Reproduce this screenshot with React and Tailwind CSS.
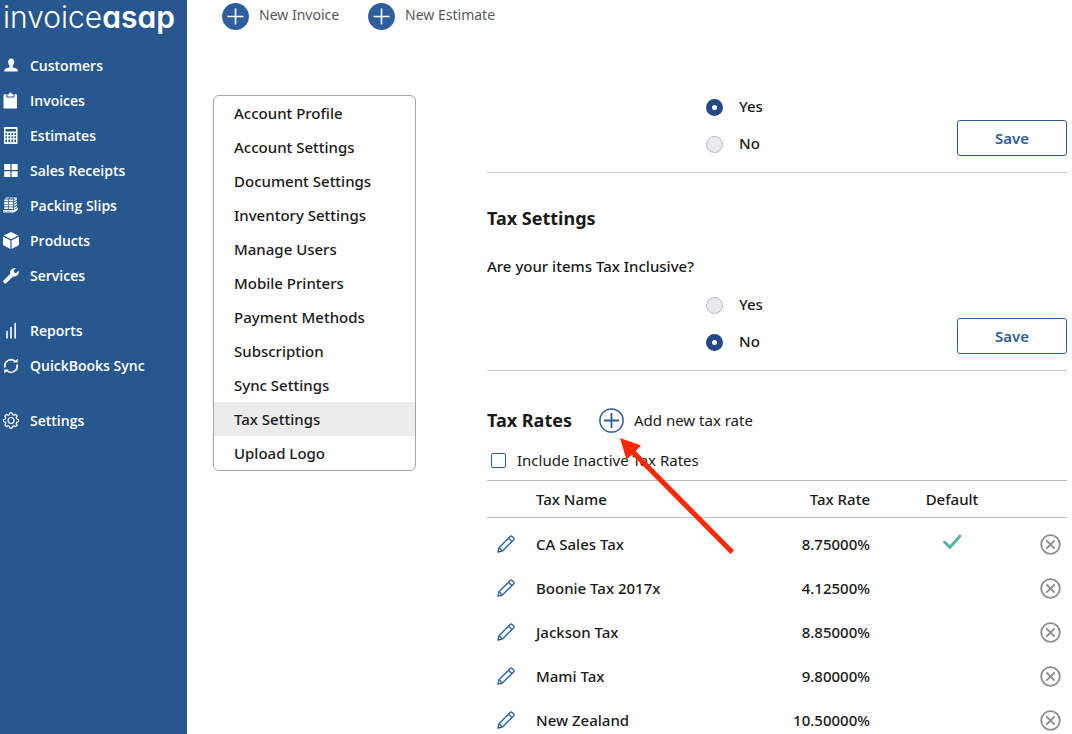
import React, { useState } from "react";

const navGroups = [
  [
    {
      label: "Customers",
      icon: (
        <path
          fill="currentColor"
          d="M8.200 1.500c2 0 3 1.500 3 3.500 0 1.400-.6 2.900-1.500 3.700v1.200c0 .6 3.900 1.200 4.600 2.300.3.500.4 1.500.4 2.300H1.300c0-.8.1-1.800.4-2.300.7-1.100 4.900-1.700 4.900-2.300V8.700C5.700 7.900 5.200 6.400 5.200 5c0-2 1-3.500 3-3.500z"
        />
      ),
    },
    {
      label: "Invoices",
      icon: (
        <g fill="currentColor">
          <path d="M1.500 2.200h1.900v3.200h8V2.200h1.900q.7 0 .7.700v12.900q0 .7-.7.700H1.200q-.7 0-.7-.7V2.900q0-.7 1-.7z" />
          <path d="M4.400 4.500V2.300h1.500C6 1.100 6.700.5 7.400.5s1.400.6 1.500 1.800h1.500v2.200z" />
        </g>
      ),
    },
    {
      label: "Estimates",
      icon: (
        <path
          fill="currentColor"
          fillRule="evenodd"
          d="M2 0h11.500q1 0 1 1v15q0 1-1 1H2q-1 0-1-1V1q0-1 1-1zM2.500 2v2.500H13V2zM2.500 6v2H4V6zM5.400 6v2H7V6zM8.400 6v2H10V6zM11.400 6v2H13V6zM2.500 9.300v2H4v-2zm2.900 0v2H7v-2zm3 0v2H10v-2zm3 0v2H13v-2zM2.500 12.600v2.600H4v-2.600zm2.900 0v2.600H7v-2.600zm3 0v2.600H10v-2.600zm3 0v2.600H13v-2.600z"
        />
      ),
    },
    {
      label: "Sales Receipts",
      icon: (
        <path
          fill="currentColor"
          d="M1.200 2h6.200v6H1.200zM8.600 2h6v6h-6zM1.200 9.200h6.200v5.800H1.200zM8.600 9.200h6v5.800h-6z"
        />
      ),
    },
    {
      label: "Packing Slips",
      icon: (
        <g fill="currentColor">
          <path d="M1.500 1.600 3.500.4h3L5.500 1.600zM6.300 1.600 7.500.4h3l-1.200 1.200zM10.100 1.600 11.500.4h2.500l-1.600 1.700z" />
          <path d="M1.300 2.400h4v1.900h-4zM6 2.400h4v1.900H6zM1.300 5h4v1.900h-4zM6 5h4v1.900H6zM1.300 7.600h4v1.900h-4zM6 7.600h4v1.900H6zM1.300 10.200h4v1.900h-4zM6 10.200h4v1.900H6z" />
          <path d="M10.800 2.900 14 .9v1.500l-3.200 2zM10.800 5.500 14 3.500V5l-3.200 2zM10.800 8.100 14 6.100v1.500l-3.200 2zM10.800 10.700 14 8.700v1.500l-3.200 2z" />
          <path d="M0 13h10.500l4.500-2.400v1.800L11 15.500H0v-1h2.500v-.6H0zM4 14v.6h3V14z" fillRule="evenodd" />
        </g>
      ),
    },
    {
      label: "Products",
      icon: (
        <path
          fill="currentColor"
          d="M8 0l7.300 3.500L8 7.200.7 3.500zM0 4.700l7.400 3.600v8.600L.8 13.500Q0 13.100 0 12.300zM16 4.700v7.600q0 .8-.8 1.200L8.600 16.900V8.300z"
        />
      ),
    },
    {
      label: "Services",
      icon: (
        <path
          fill="currentColor"
          d="M.6 13.600 7.100 7.100C6.500 4 8.700.8 13 1.100L10.600 3.500l.5 2 2.100.6 2.500-2.400c.7 3.900-2.600 6.600-5.700 5.700l-6.600 6.500c-.7.700-1.700.7-2.400.1s-1-1.700-.4-2.400z"
        />
      ),
    },
  ],
  [
    {
      label: "Reports",
      icon: (
        <path
          stroke="currentColor"
          strokeWidth="1.600"
          strokeLinecap="round"
          fill="none"
          d="M4 9.500v6.500M8 5.500v10.500M12.200 1.500v14.500"
        />
      ),
    },
    {
      label: "QuickBooks Sync",
      icon: (
        <g>
          <path
            stroke="currentColor"
            strokeWidth="1.700"
            fill="none"
            d="M2 10.500A6.200 6.200 0 0 1 12.300 4.500M14 7.500A6.200 6.200 0 0 1 3.700 13.500"
          />
          <path fill="currentColor" d="M10 5.500h4.700V1.700zM6 12.400H1.300v3.800z" />
        </g>
      ),
    },
  ],
  [
    {
      label: "Settings",
      icon: (
        <g fill="none" stroke="currentColor" strokeWidth="1.200" strokeLinejoin="round">
          <path d="M6.900.9h2.200l.5 1.800 1.300.6 1.700-.9 1.500 1.500-.9 1.700.6 1.400 1.800.5v2.100l-1.800.5-.6 1.400.9 1.600-1.500 1.500-1.700-.9-1.300.6-.5 1.800H6.900l-.5-1.800-1.300-.6-1.700.9-1.500-1.500.9-1.600-.6-1.400-1.800-.5V7.500l1.800-.5.6-1.400-.9-1.700 1.500-1.500 1.700.9 1.300-.6z" />
          <circle cx="8" cy="8.500" r="3" />
        </g>
      ),
    },
  ],
];

const settingsMenu = [
  "Account Profile",
  "Account Settings",
  "Document Settings",
  "Inventory Settings",
  "Manage Users",
  "Mobile Printers",
  "Payment Methods",
  "Subscription",
  "Sync Settings",
  "Tax Settings",
  "Upload Logo",
];

const taxRates = [
  { name: "CA Sales Tax", rate: "8.75000%", isDefault: true },
  { name: "Boonie Tax 2017x", rate: "4.12500%" },
  { name: "Jackson Tax", rate: "8.85000%" },
  { name: "Mami Tax", rate: "9.80000%" },
  { name: "New Zealand", rate: "10.50000%" },
];

function Sidebar() {
  return (
    <aside className="w-[187px] shrink-0 bg-[#27578f] text-white">
      <a
        href="#home"
        className="block h-12 pl-[3px] font-['Inter',sans-serif] text-[30px] leading-[34px] font-light [font-feature-settings:'cv11']"
      >
        invoice<span className="font-semibold">asap</span>
      </a>
      <nav className="flex flex-col gap-5 font-['Open_Sans',sans-serif] text-sm font-semibold">
        {navGroups.map((group) => (
          <ul key={group[0].label}>
            {group.map((item) => (
              <li key={item.label}>
                <a href="#nav" className="flex h-[35px] items-center gap-[11px] pl-[3px]">
                  <svg viewBox="0 0 16 17" className="h-[17px] w-4 shrink-0" aria-hidden="true">
                    {item.icon}
                  </svg>
                  {item.label}
                </a>
              </li>
            ))}
          </ul>
        ))}
      </nav>
    </aside>
  );
}

function NewButton({ label }) {
  return (
    <button type="button" className="flex items-center gap-2.5 text-sm text-[#58595b]">
      <svg viewBox="0 0 27 27" className="size-[27px]" aria-hidden="true">
        <circle cx="13.500" cy="13.500" r="13.400" fill="#2d5f9e" />
        <path d="M13.500 5.500v16M5.500 13.500h16" stroke="#fff" strokeWidth="1.600" />
      </svg>
      <span className="pb-1">{label}</span>
    </button>
  );
}

function YesNo({ name, initial }) {
  const [value, setValue] = useState(initial);
  return (
    <div className="flex items-end justify-between">
      <div className="pl-[219px]">
        {["Yes", "No"].map((option) => (
          <label key={option} className="flex h-[37px] items-center gap-4">
            <input
              type="radio"
              name={name}
              checked={value === option}
              onChange={() => setValue(option)}
              className="mt-0.5 size-[17px] appearance-none rounded-full border border-[#b9babd] bg-[#e9eaee] checked:border-[6px] checked:border-[#244886] checked:bg-white"
            />
            {option}
          </label>
        ))}
      </div>
      <button
        type="button"
        className="mb-1.5 h-9 w-[110px] rounded-[3px] border border-[#2c5c9b] text-[15px] font-semibold text-[#2f5c9c]"
      >
        Save
      </button>
    </div>
  );
}

function PencilIcon() {
  return (
    <svg viewBox="0 0 18 18" className="size-[18px]" fill="none" stroke="#2f66a3" strokeWidth="1.400" strokeLinejoin="round" aria-hidden="true">
      <path d="M.9 17.100 2 12.700 13.200 1.500q.9-.9 1.800 0l1.600 1.600q.9.900 0 1.800L5.400 16z" />
      <path d="M2 12.700 5.400 16M11.500 3.200l3.400 3.400" />
    </svg>
  );
}

function TaxTable() {
  return (
    <table className="w-full table-fixed border-collapse">
      <thead>
        <tr className="h-[37px] border-y border-[#bdbdbd]">
          <th className="w-[49px] p-0" />
          <th className="p-0 text-left font-medium">Tax Name</th>
          <th className="w-[120px] p-0 text-right font-medium">Tax Rate</th>
          <th className="w-[164px] p-0 text-center font-medium">Default</th>
          <th className="w-[33px] p-0" />
        </tr>
      </thead>
      <tbody className="before:block before:h-1 before:content-['']">
        {taxRates.map((tax) => (
          <tr key={tax.name} className="h-11">
            <td className="p-0 pl-2.5">
              <button type="button" aria-label={`Edit ${tax.name}`} className="block">
                <PencilIcon />
              </button>
            </td>
            <td className="p-0">{tax.name}</td>
            <td className="p-0 text-right">{tax.rate}</td>
            <td className="p-0">
              {tax.isDefault && (
                <svg viewBox="0 0 20 16" className="mx-auto mb-1 h-4 w-5" fill="none" stroke="#56b5a7" strokeWidth="3" aria-hidden="true">
                  <path d="M2.500 8l5.500 5.300L17.800 2.200" strokeLinecap="round" strokeLinejoin="miter" />
                </svg>
              )}
            </td>
            <td className="p-0">
              <button type="button" aria-label={`Remove ${tax.name}`} className="mx-auto block">
                <svg viewBox="0 0 21 21" className="size-[21px]" fill="none" stroke="#8c8c8c" strokeWidth="1.800" aria-hidden="true">
                  <circle cx="10.500" cy="10.500" r="9.300" />
                  <path d="M6.300 6.300l8.400 8.400M14.700 6.300l-8.400 8.400" />
                </svg>
              </button>
            </td>
          </tr>
        ))}
      </tbody>
    </table>
  );
}

export default function App() {
  const [active, setActive] = useState("Tax Settings");
  return (
    <div className="flex h-screen overflow-hidden bg-white font-['Noto_Sans',sans-serif] text-[15px] font-medium text-[#1a1a1a]">
      <Sidebar />
      <main className="min-w-0 flex-1 pr-[5px]">
        <header className="flex h-[88px] items-start gap-[29px] pt-[3px] pl-[35px] font-normal">
          <NewButton label="New Invoice" />
          <NewButton label="New Estimate" />
        </header>
        <div className="flex items-start gap-[71px] pl-[26px]">
          <ul className="mt-[7px] w-[203px] shrink-0 overflow-hidden rounded-md border border-[#a3a3a3]">
            {settingsMenu.map((item) => (
              <li key={item}>
                <button
                  type="button"
                  onClick={() => setActive(item)}
                  className={
                    item === active
                      ? "block h-[34px] w-full bg-[#ececec] pl-5 text-left"
                      : "block h-[34px] w-full pl-5 text-left"
                  }
                >
                  {item}
                </button>
              </li>
            ))}
          </ul>
          <div className="min-w-0 flex-1">
            <section className="border-b border-[#c8c8c8] pb-2.5">
              <YesNo name="first-option" initial="Yes" />
            </section>
            <section className="border-b border-[#c8c8c8] pt-[33px] pb-2.5">
              <h2 className="text-lg leading-6 font-bold">Tax Settings</h2>
              <p className="mt-6 mb-2 leading-6">Are your items Tax Inclusive?</p>
              <YesNo name="tax-inclusive" initial="No" />
            </section>
            <section className="pt-9">
              <div className="flex h-[26px] items-center gap-[27px]">
                <h2 className="text-lg leading-6 font-bold">Tax Rates</h2>
                <button type="button" className="relative flex items-center gap-2.5 font-normal">
                  <svg viewBox="0 0 25 25" className="size-[25px]" fill="none" stroke="#2c5c9b" strokeWidth="1.500" aria-hidden="true">
                    <circle cx="12.500" cy="12.500" r="11.600" />
                    <path d="M12.500 5v15M5 12.500h15" strokeWidth="1.800" />
                  </svg>
                  Add new tax rate
                  <svg
                    viewBox="0 0 116 118"
                    className="pointer-events-none absolute top-[29px] left-[20px] z-10 h-[118px] w-[116px]"
                    aria-hidden="true"
                  >
                    <path d="M1 1l21 7.500-5.400 5.500L115 113.500l-3.500 3.500L13 17.700 7.500 22.500z" fill="#ff2600" />
                  </svg>
                </button>
              </div>
              <label className="mt-[15px] mb-2 flex h-6 items-center gap-[11px] pl-1 font-normal">
                <input
                  type="checkbox"
                  className="size-[15px] appearance-none rounded-[2px] border border-[#2c5c9b] bg-white checked:bg-[#2c5c9b]"
                />
                Include Inactive Tax Rates
              </label>
              <TaxTable />
            </section>
          </div>
        </div>
      </main>
    </div>
  );
}
